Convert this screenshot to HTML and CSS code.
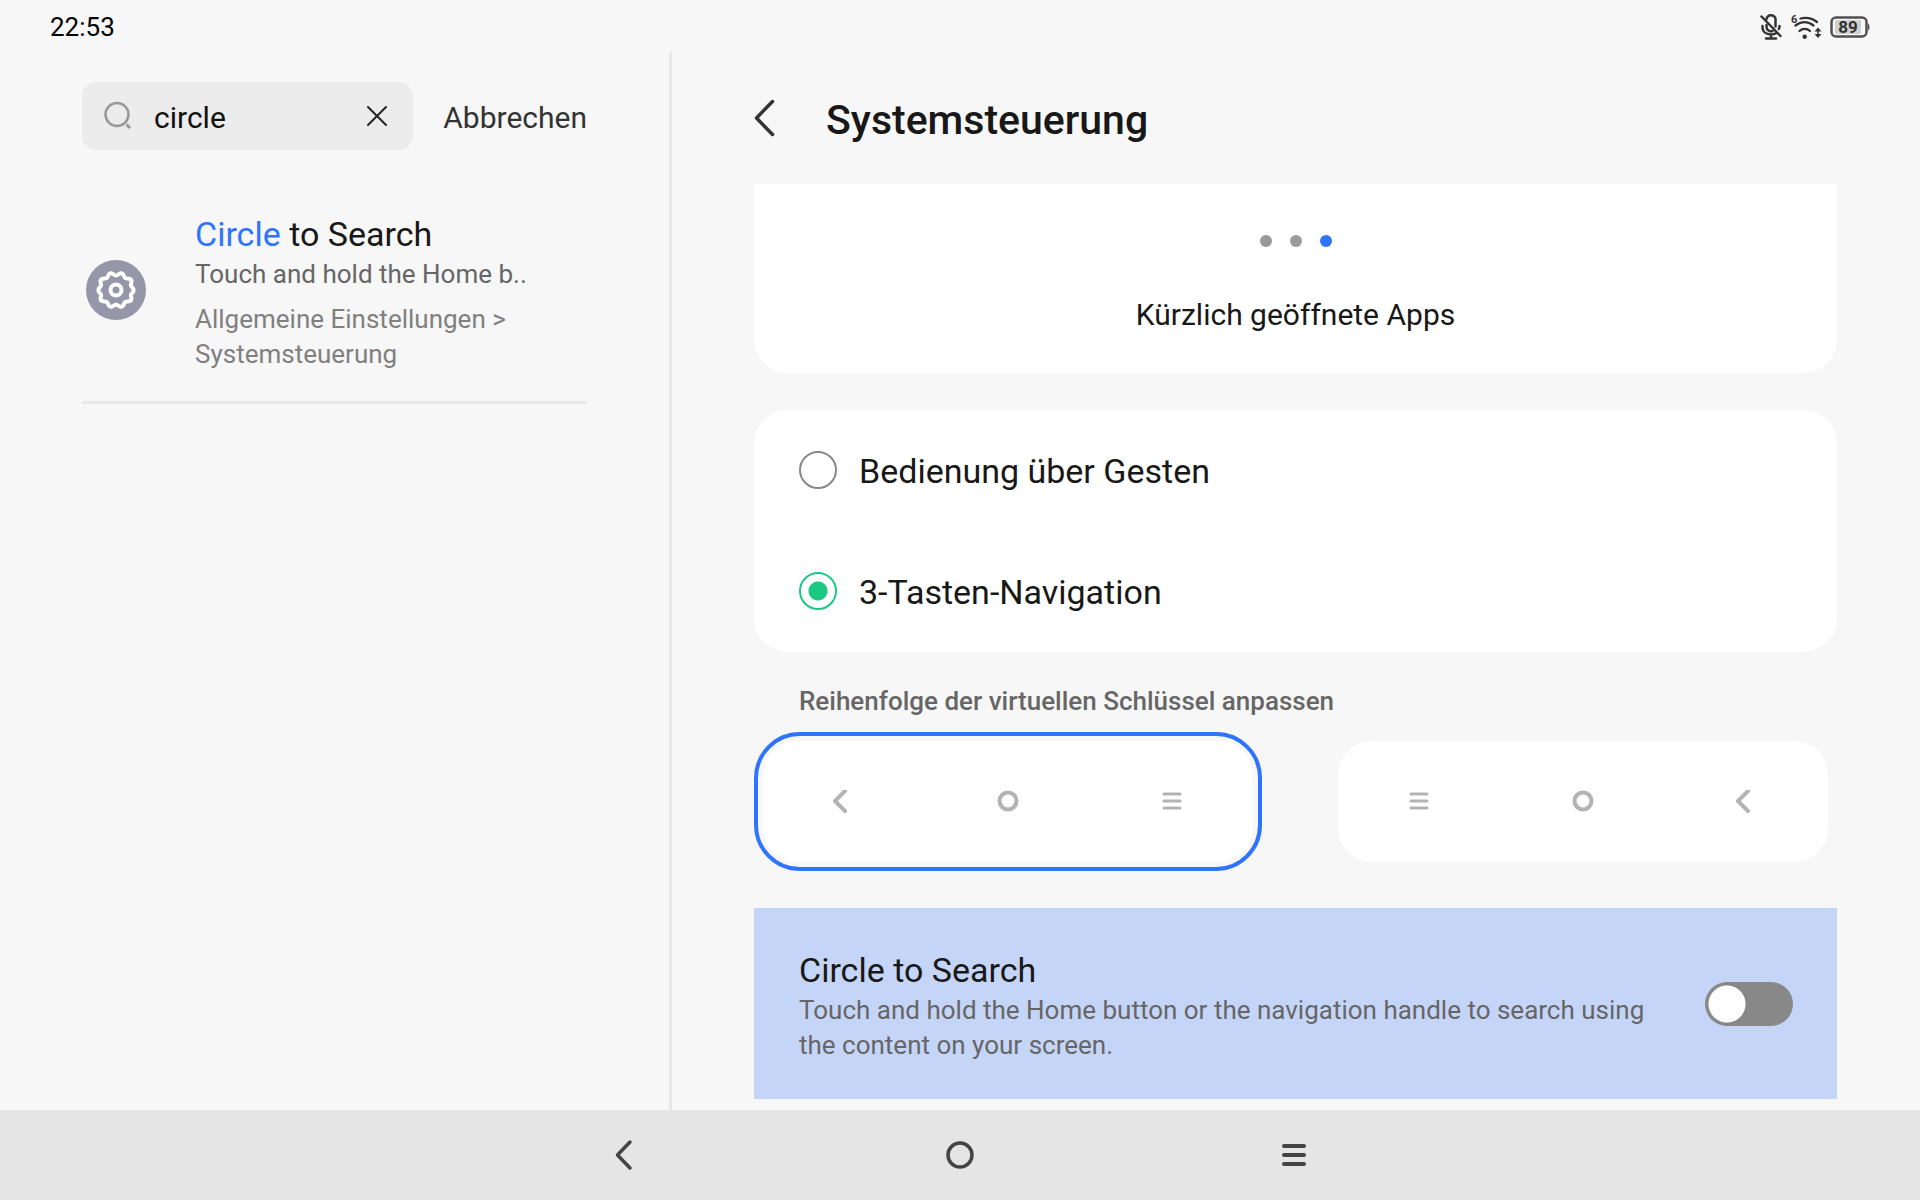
FILE: index.html
```html
<!DOCTYPE html>
<html lang="de">
<head>
<meta charset="utf-8">
<meta name="viewport" content="width=device-width, initial-scale=1">
<title>Systemsteuerung</title>
<link rel="stylesheet" href="styles.css">
</head>
<body>
<svg class="defs" aria-hidden="true">
  <symbol id="back" viewBox="0 0 24 24"><path d="M13 1 3 11l10 10" fill="none" stroke="currentColor" stroke-width="4" stroke-linecap="round" stroke-linejoin="round"/></symbol>
  <symbol id="home" viewBox="0 0 24 24"><circle cx="12" cy="11" r="8.500" fill="none" stroke="currentColor" stroke-width="4"/></symbol>
  <symbol id="menu" viewBox="0 0 24 24"><path d="M4 4h16M4 11h16M4 18h16" fill="none" stroke="currentColor" stroke-width="3" stroke-linecap="round"/></symbol>
</svg>

<header class="statusbar">
  <time>22:53</time>
  <div class="status-icons">
    <svg width="22" height="26" viewBox="0 0 22 26" fill="none" stroke="#333" stroke-width="2.500" stroke-linecap="round">
      <path d="M6.500 5a4.500 4.500 0 0 1 9 1.500v6M6.500 11v2a4.500 4.500 0 0 0 6 4M2.500 12v1c0 5 4 7.500 8.500 7.500 2 0 4-.5 5.500-1.500M19.500 12c0 1-.2 2-.6 3M11 21v3M6 24.500h10"/>
      <path d="M1.500 2.500 20.500 22"/>
    </svg>
    <svg width="32" height="26" viewBox="0 0 32 26" fill="none" stroke="#333" stroke-width="2.300" stroke-linecap="round">
      <path d="M10.500 4.500c6-1.500 11.500-.5 16.500 3.500M5.500 11.500c5.500-4.500 12.500-4.500 18 0M9.500 17c3-2.800 7.500-2.800 10.500 0"/>
      <circle cx="14.700" cy="22.800" r="2.200" fill="#333" stroke="none"/>
      <path d="M28 13.500l3.500 4h-7zM28 24l3.500-4h-7z" fill="#333" stroke="none"/>
      <path d="M28 16v5" stroke-width="1.500"/>
      <text class="wifi-gen" x="1" y="9">6</text>
    </svg>
    <svg width="40" height="22" viewBox="0 0 40 22">
      <rect x="1.500" y="1.500" width="35" height="19" rx="4.500" fill="none" stroke="#505050" stroke-width="2.500"/>
      <rect x="5" y="4" width="26" height="14" rx="1" fill="#d0d0d0"/>
      <path d="M38 7.500c2 1 2 6 0 7z" fill="#505050"/>
      <text class="battery-level" x="18" y="17">89</text>
    </svg>
  </div>
</header>

<div class="panes">
  <aside class="search-pane">
    <form class="search">
      <div class="search-box">
        <svg width="28" height="30" viewBox="0 0 28 30" fill="none" stroke="#999" stroke-width="2.500"><circle cx="13" cy="13.500" r="11.500"/><path d="M22.500 23.500l3.500 3.500" stroke-width="3"/></svg>
        <input class="search-input" type="text" value="circle" aria-label="Suche">
        <button class="icon-button" type="button" aria-label="Löschen">
          <svg width="22" height="22" viewBox="0 0 22 22" fill="none" stroke="#222" stroke-width="2" stroke-linecap="round"><path d="M2 2l18 18M20 2 2 20"/></svg>
        </button>
      </div>
      <button class="cancel" type="button">Abbrechen</button>
    </form>
    <a class="result" href="#circle">
      <svg class="result-icon" width="60" height="60" viewBox="0 0 60 60">
        <circle cx="30" cy="30" r="30" fill="#9696a9"/>
        <path fill="none" stroke="#fff" stroke-width="4" stroke-linejoin="round" d="M30.0 15.600C32.2 15.600 32.900 12.600 35.500 13.200C38.400 14 37.500 16.800 39.100 18C40.900 19.300 43.100 17.600 45 19.600C46.800 21.900 44.300 23.500 44.900 25.400C45.500 27.400 47.600 27.400 47.600 30.200C47.600 33 45.500 32.700 44.900 34.700C44.300 36.700 46.600 38.100 45 40.400C43.200 42.500 40.900 40.800 39.100 42C37.400 43.300 38.300 46 35.500 46.800C32.700 47.400 32.200 44.400 30 44.400C27.800 44.400 27.300 47.400 24.500 46.800C21.700 46 22.600 43.300 20.900 42C19.100 40.800 16.800 42.500 15 40.400C13.400 38.100 15.700 36.700 15.100 34.700C14.500 32.700 12.400 33 12.400 30.200C12.400 27.400 14.500 27.400 15.100 25.400C15.700 23.500 13.200 21.900 15 19.600C16.900 17.600 19.100 19.300 20.900 18C22.500 16.800 21.600 14 24.500 13.200C27.100 12.600 27.800 15.600 30 15.600Z"/>
        <circle cx="30" cy="30" r="5.500" fill="none" stroke="#fff" stroke-width="4"/>
      </svg>
      <span class="result-text">
        <span class="item-title"><mark>Circle</mark> to Search</span>
        <span class="item-text">Touch and hold the Home b..</span>
        <span class="item-path">Allgemeine Einstellungen &gt; Systemsteuerung</span>
      </span>
    </a>
  </aside>

  <main class="detail">
    <div class="detail-head">
      <button class="icon-button" type="button" aria-label="Zurück">
        <svg width="22" height="38" viewBox="0 0 22 38" fill="none" stroke="#333" stroke-width="3.500" stroke-linecap="round" stroke-linejoin="round"><path d="M18.500 2.500 2.500 19l16 16.500"/></svg>
      </button>
      <h1>Systemsteuerung</h1>
    </div>

    <section class="card preview">
      <div class="dots"><i></i><i></i><i class="active"></i></div>
      <p>Kürzlich geöffnete Apps</p>
    </section>

    <section class="card options">
      <label class="option"><input type="radio" name="nav"><span>Bedienung über Gesten</span></label>
      <label class="option"><input type="radio" name="nav" checked><span>3-Tasten-Navigation</span></label>
    </section>

    <h2>Reihenfolge der virtuellen Schlüssel anpassen</h2>
    <div class="orders">
      <button class="order selected" type="button" aria-label="Zurück, Home, Menü">
        <span class="order-keys"><svg><use href="#back"/></svg><svg><use href="#home"/></svg><svg><use href="#menu"/></svg></span>
      </button>
      <button class="order" type="button" aria-label="Menü, Home, Zurück">
        <span class="order-keys"><svg><use href="#menu"/></svg><svg><use href="#home"/></svg><svg><use href="#back"/></svg></span>
      </button>
    </div>

    <label class="setting" id="circle">
      <span class="setting-text">
        <span class="item-title">Circle to Search</span>
        <span class="item-text">Touch and hold the Home button or the navigation handle to search using the content on your screen.</span>
      </span>
      <input class="switch" type="checkbox" role="switch">
    </label>
  </main>
</div>

<nav class="navbar">
  <button class="icon-button" type="button" aria-label="Zurück"><svg width="32" height="32" viewBox="0 0 32 32" fill="none" stroke="#444" stroke-width="3.500" stroke-linecap="round" stroke-linejoin="round"><path d="M21 3 8.500 16 21 29"/></svg></button>
  <button class="icon-button" type="button" aria-label="Home"><svg width="32" height="32" viewBox="0 0 32 32" fill="none" stroke="#444" stroke-width="3.500"><circle cx="16" cy="16" r="12"/></svg></button>
  <button class="icon-button" type="button" aria-label="Menü"><svg width="32" height="32" viewBox="0 0 32 32" fill="none" stroke="#444" stroke-width="4" stroke-linecap="round"><path d="M5 7h20M5 16h20M5 25h20"/></svg></button>
</nav>
</body>
</html>
```
FILE: styles.css
```css
* {
  box-sizing: border-box;
}

body {
  display: flex;
  flex-direction: column;
  min-height: 100vh;
  margin: 0;
  background: #f7f7f7;
  color: #181818;
  font-family: Roboto, "Noto Sans", sans-serif;
  font-size: 30px;
}

svg {
  display: block;
  flex: none;
}

button {
  padding: 0;
  border: 0;
  background: none;
  color: inherit;
  font: inherit;
}

h1,
h2,
p {
  margin: 0;
}

.defs {
  position: absolute;
  width: 0;
  height: 0;
}

/* Status bar */
.statusbar {
  display: flex;
  align-items: center;
  justify-content: space-between;
  height: 52px;
  padding: 2px 50px 0;
  color: #000;
  font-size: 26px;
}

.status-icons {
  display: flex;
  align-items: center;
  gap: 8px;
}

.wifi-gen {
  fill: #333;
  stroke: none;
  font-size: 11px;
  font-weight: 700;
}

.battery-level {
  fill: #333;
  font-size: 17px;
  font-weight: 700;
  text-anchor: middle;
}

/* Panes */
.panes {
  display: flex;
  flex: 1;
}

.search-pane {
  width: 35%;
  padding: 30px 82px 0;
  border-right: 3px solid #e8e8e8;
}

.search {
  display: flex;
  align-items: center;
  gap: 30px;
}

.search-box {
  display: flex;
  flex: 1;
  align-items: center;
  gap: 22px;
  height: 68px;
  padding: 0 25px 0 22px;
  border-radius: 14px;
  background: #ececec;
}

.search-input {
  flex: 1;
  width: 0;
  padding: 2px 0 0;
  border: 0;
  outline: 0;
  background: none;
  color: #111;
  font: inherit;
}

.cancel {
  padding-top: 2px;
  color: #333;
}

.result {
  display: flex;
  align-items: center;
  gap: 49px;
  margin-top: 62px;
  padding: 0 0 29px 4px;
  border-bottom: 3px solid #e8e8e8;
  color: inherit;
  text-decoration: none;
}

.result-icon {
  margin-bottom: 4px;
}

.result-text,
.setting-text {
  display: flex;
  flex: 1;
  flex-direction: column;
}

.item-title {
  font-size: 34px;
  line-height: 44px;
}

.item-title mark {
  background: none;
  color: #2f74ff;
}

.item-text,
.item-path {
  margin-top: 1px;
  color: #666;
  font-size: 26px;
  line-height: 35px;
}

.item-path {
  margin-top: 10px;
  color: #808080;
}

/* Detail pane */
.detail {
  flex: 1;
  padding: 0 83px 11px 82px;
}

.detail-head {
  display: flex;
  align-items: center;
  gap: 50px;
  height: 132px;
}

h1 {
  padding-top: 4px;
  font-size: 41px;
  font-weight: 500;
}

.card {
  border-radius: 34px;
  background: #fff;
}

.preview {
  display: flex;
  flex-direction: column;
  align-items: center;
  gap: 50px;
  padding: 51px 0 40px;
  border-top-left-radius: 0;
  border-top-right-radius: 0;
}

.dots {
  display: flex;
  gap: 18px;
}

.dots i {
  width: 12px;
  height: 12px;
  border-radius: 50%;
  background: #999;
}

.dots .active {
  background: #2f74ff;
}

.preview p {
  line-height: 36px;
}

.options {
  margin-top: 37px;
}

.option {
  display: flex;
  align-items: center;
  gap: 22px;
  height: 121px;
  padding: 0 45px;
  font-size: 34px;
}

.option input {
  appearance: none;
  width: 38px;
  height: 38px;
  margin: 0 0 2px;
  border: 2px solid #888;
  border-radius: 50%;
}

.option input:checked {
  border-color: #1bc983;
  background: radial-gradient(circle, #1bc983 9px, transparent 10px);
}

h2 {
  padding: 32px 45px 13px;
  color: #666;
  font-size: 26px;
  font-weight: 500;
  line-height: 35px;
}

.orders {
  display: flex;
  gap: 67px;
}

.order {
  flex: 1;
  padding: 5px;
  border: 4px solid transparent;
  border-radius: 46px;
}

.order.selected {
  border-color: #2f74ff;
}

.order-keys {
  display: flex;
  align-items: center;
  justify-content: space-between;
  height: 121px;
  padding: 0 69px;
  border-radius: 34px;
  background: #fff;
  color: #b3b3b3;
}

.order-keys svg {
  width: 24px;
  height: 24px;
}

.setting {
  display: flex;
  align-items: center;
  gap: 48px;
  margin-top: 37px;
  padding: 40px 44px 36px 45px;
  background: #c5d5f8;
}

.switch {
  appearance: none;
  flex: none;
  width: 88px;
  height: 44px;
  margin: 0 0 4px;
  border-radius: 22px;
  background: radial-gradient(circle at 22px 50%, #fff 18px, #888 19px);
}

/* Navigation bar */
.navbar {
  display: flex;
  align-items: center;
  justify-content: center;
  gap: 303px;
  height: 90px;
  background: #e5e5e5;
}
```
